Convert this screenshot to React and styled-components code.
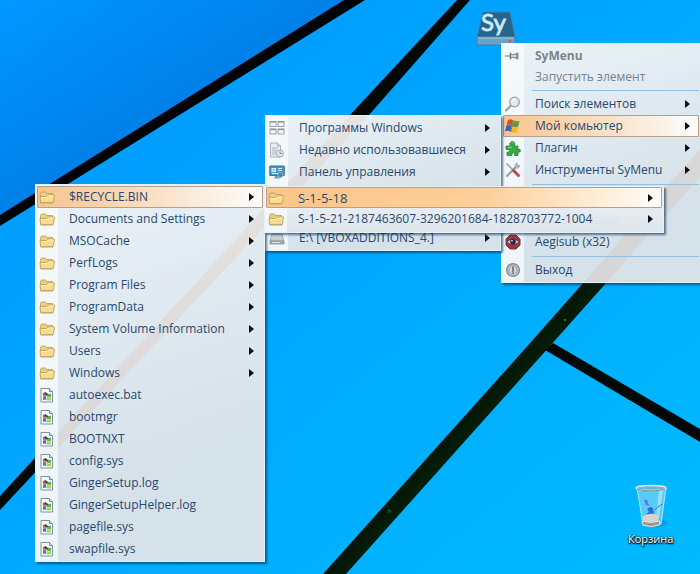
import styled, { createGlobalStyle } from "styled-components";

const GlobalStyle = createGlobalStyle`
  *, *::before, *::after {
    box-sizing: border-box;
  }
  body {
    margin: 0;
    overflow: hidden;
    font-family: "Open Sans", "Noto Sans", sans-serif;
  }
`;

const Desktop = styled.main`
  position: relative;
  min-height: 100vh;
  overflow: hidden;
  background-color: #00b2ff;
`;

const WallpaperArt = styled.svg`
  position: absolute;
  inset: 0;
  width: 100%;
  height: 100%;
`;

const Menu = styled.div`
  position: absolute;
  top: ${({ $top }) => $top}px;
  left: ${({ $left }) => $left}px;
  width: ${({ $width }) => $width}px;
  display: flex;
  flex-direction: column;
  padding: ${({ $flush }) => ($flush ? "0 1px 2px" : "1px")};
  border: 1px solid #e6f2f9;
  background:
    linear-gradient(90deg, rgba(250, 253, 255, 0.7) 22px, transparent 22px),
    ${({ $flush }) =>
      $flush
        ? "linear-gradient(180deg, rgba(240, 243, 246, 0.97), rgba(222, 230, 236, 0.96))"
        : "linear-gradient(160deg, rgba(252, 248, 246, 0.93), rgba(232, 230, 232, 0.92) 70%)"};
  box-shadow: 2px 2px 2px rgba(0, 40, 80, 0.6);
`;

const Item = styled.button`
  display: grid;
  grid-template-columns: 20px 1fr 14px;
  column-gap: 10px;
  align-items: center;
  height: ${({ $short }) => ($short ? 21 : 22)}px;
  padding: 0 4px 0 1px;
  border: 1px solid ${({ $active }) => ($active ? "#b99f86" : "transparent")};
  border-radius: 1px;
  background: ${({ $active, $strong }) =>
    $active
      ? $strong
        ? "linear-gradient(90deg, #fbc58c, #ffcf99 55%, #fffaf3 97%)"
        : "linear-gradient(90deg, #f7c490, #f9dfc3 50%, #fcfaf8 95%)"
      : "none"};
  color: ${({ $muted }) => ($muted ? "#7d838a" : "#27496d")};
  font-family: inherit;
  font-size: ${({ $size }) => $size || 12}px;
  font-weight: ${({ $bold }) => ($bold ? 700 : 400)};
  line-height: 18px;
  text-align: left;
  white-space: nowrap;
  cursor: pointer;
`;

const Label = styled.span`
  min-width: 0;
`;

const Arrow = styled.span`
  justify-self: center;
  width: 0;
  height: 0;
  border: 4px solid transparent;
  border-left: 5px solid #0b0f16;
  border-right: 0;
`;

const Separator = styled.hr`
  width: calc(100% - 29px);
  height: 1px;
  margin: 3px 0 2px 29px;
  border: 0;
  background-color: #93bfe0;
`;

const Glyph = styled.svg`
  display: block;
  width: 16px;
  height: 16px;
`;

const Shortcut = styled.button`
  position: absolute;
  top: ${({ $top }) => $top}px;
  left: ${({ $left }) => $left}px;
  display: flex;
  flex-direction: column;
  align-items: center;
  gap: 2px;
  padding: 0;
  border: 0;
  background: none;
  color: #ffffff;
  font-family: inherit;
  font-size: 11px;
  line-height: 16px;
  text-shadow: 0 0 2px #000000, 1px 1px 2px #000000, 0 1px 1px #000000;
  cursor: pointer;

  svg {
    text-shadow: none;
  }
`;

const icons = {
  folder: (
    <>
      <path d="M1.500 12.500V4.500L2.500 3h4l1 1.500h6V7" fill="#ecd183" stroke="#b99a4c" strokeWidth=".8" />
      <path d="M1 7.500h6.500l1.500-1.500h6.500L14.300 13.500H1.500Z" fill="#f6dc8c" stroke="#bd9b48" strokeWidth=".8" />
      <path d="M2 8.500h6l1.500-1.500h5" stroke="#fff5c8" strokeWidth=".9" fill="none" />
      <path d="M1.500 14.300h12.500" stroke="#b7ad91" strokeWidth=".7" />
    </>
  ),
  file: (
    <>
      <path d="M2 1.500h8.500l3 3V15H2Z" fill="#f7fbff" stroke="#7694b0" />
      <path d="M10.500 1.500v3h3" fill="#d3e5f2" stroke="#5d8dbf" />
      <path d="M4 6q2-1 3 0v3q-2-1-3 0Z" fill="#a95f39" />
      <path d="M7.500 6q2 1.500 4.500.5v3q-2 1-4.500 0Z" fill="#67a94f" />
      <path d="M4 9.500q2-1 3 0V13q-1.500-1-3 0Z" fill="#5277b7" />
      <path d="M7.500 10q2 1 4.500 0v3.200q-2 .8-4.500 0Z" fill="#a9ce59" />
      <path d="M6 5.500 8.500 8" stroke="#3b352f" strokeWidth="1.500" />
    </>
  ),
  pin: (
    <>
      <path d="M0 8h5" stroke="#858b90" strokeWidth="1.300" />
      <path d="M5.500 4.500v7" stroke="#747b80" strokeWidth="1.400" />
      <path d="M6 6.500q2.500 1 5.500-1v5q-3-2-5.500-1" fill="#dde0e3" stroke="#747b80" />
      <path d="M12.500 4.500v7" stroke="#8a9095" strokeWidth="1.800" />
    </>
  ),
  search: (
    <>
      <path d="m6 9.500-5 5" stroke="#aaa19a" strokeWidth="2.400" strokeLinecap="round" />
      <circle cx="9.500" cy="6" r="4.800" fill="#dceaf4" stroke="#98a2aa" strokeWidth="1.300" />
      <path d="M7 5.500Q8 3 10.500 3" stroke="#fff" fill="none" strokeWidth="1.300" />
    </>
  ),
  windows: (
    <>
      <path d="M2.800 2.500q2.500-2 5-.5L6.800 7Q4.300 5.500 1.500 7Z" fill="#d94a25" />
      <path d="M8.800 2.500q2.500 1.500 5.700.2L13.300 8q-2.800 1-5.500-.5Z" fill="#57a032" />
      <path d="M1.300 8q2.700-1.500 5.200-.2L5.300 13.500Q2.800 12 0 13.500Z" fill="#3162c4" />
      <path d="M7.500 8.700q2.700 1.300 5.500.2L11.700 14.500q-2.800 1-5.500-.8Z" fill="#eeb820" />
      <path d="M8.200 2 5.800 14M1.300 7.500q3-1.500 5.500 0t6 .7" stroke="#5b4a45" strokeWidth=".7" fill="none" />
    </>
  ),
  puzzle: (
    <>
      <path
        d="M1 6h4.500Q4.300 4.500 5 3q1.300-2.500 4-1 1.600 1.800.3 4H13v3.500q2.500-.8 2.500 1.200T13 12v3.500H9.500q.8-2.800-1.200-2.800T7 15.500H2v-3.200q2.500.3 2.500-1.500T1 9.500Z"
        fill="#38a849"
        stroke="#238434"
        strokeWidth=".8"
      />
      <path d="M3 7.300h4M6.500 3q1-.8 2 0" stroke="#8bd68d" fill="none" />
    </>
  ),
  tools: (
    <>
      <path d="m1.500 14.500 10-10" stroke="#939da5" strokeWidth="2.200" />
      <path d="M10 5.500V3L12 .8l.3 2.700 2.700.2L13 6h-3Z" fill="#b8c0c6" stroke="#8b959d" strokeWidth=".7" />
      <path d="m1.500 1.500 6.500 6.500" stroke="#8d969d" strokeWidth="1.500" />
      <path d="m8.500 8.500 5 5" stroke="#bc4d4c" strokeWidth="3" strokeLinecap="round" />
    </>
  ),
  eye: (
    <>
      <path d="M5 1h6l4 4v6l-4 4H5l-4-4V5Z" fill="#9d3441" stroke="#743540" />
      <path d="M1.500 8Q8 2.500 14.500 8 8 13 1.500 8Z" fill="#d9c3ce" stroke="#562e40" strokeWidth=".8" />
      <circle cx="8" cy="7.800" r="2.800" fill="#2d2343" />
      <circle cx="7" cy="6.800" r=".8" fill="#fff" />
    </>
  ),
  power: (
    <>
      <circle cx="8" cy="8" r="6.300" fill="#d4d8da" stroke="#858c91" strokeWidth="1.500" />
      <circle cx="8" cy="8" r="4.200" fill="none" stroke="#8c9499" />
      <path d="M8 4.500v7" stroke="#747d83" strokeWidth="1.800" />
    </>
  ),
  grid: (
    <>
      {[[1, 1.5], [9, 1.5], [1, 9], [9, 9]].map(([x, y]) => (
        <g key={`${x}-${y}`}>
          <rect x={x} y={y} width="6" height="5" fill="#f3f5f7" stroke="#9aa2a9" />
          <path d={`M${x} ${y + 0.5}h6`} stroke="#8e979e" strokeWidth="1.300" />
        </g>
      ))}
    </>
  ),
  recent: (
    <>
      <path d="M1.500 1h7l3 3v11h-10Z" fill="#e8edf1" stroke="#a6b2bb" />
      <path d="M8.500 1v3h3M3 6h6M3 8h5M3 10h4M3 12h4" stroke="#a9b7c1" fill="none" />
      <circle cx="11" cy="11.500" r="3.500" fill="#dfe5ea" stroke="#a3b0b9" />
      <path d="M11 9.500v2h2" stroke="#7c8b96" fill="none" />
    </>
  ),
  panel: (
    <>
      <path d="M.8 2h14.500v9.500H.8Z" fill="#4b97c4" stroke="#34759d" />
      <path d="M3 4.500h3.500v3H3ZM9 4.500h4M9 6.500h4M3 9.500h6" fill="#8fcbe2" stroke="#d6f0fa" strokeWidth="1.100" />
      <path d="M6 12h4l1 2.500H5Z" fill="#7f9dae" />
      <circle cx="11.500" cy="11" r="2.600" fill="#3f83b3" stroke="#b9d8e8" strokeWidth=".6" />
    </>
  ),
  drive: (
    <>
      <path d="M3 4h10l2 7H1Z" fill="#c9d0d5" stroke="#959fa7" strokeWidth=".7" />
      <path d="M1 11h14v3H1Z" fill="#a4adb4" stroke="#7f8991" strokeWidth=".7" />
      <path d="M3 12.500h8" stroke="#e1e5e8" />
    </>
  ),
};

const folders = [
  "$RECYCLE.BIN",
  "Documents and Settings",
  "MSOCache",
  "PerfLogs",
  "Program Files",
  "ProgramData",
  "System Volume Information",
  "Users",
  "Windows",
];

const files = [
  "autoexec.bat",
  "bootmgr",
  "BOOTNXT",
  "config.sys",
  "GingerSetup.log",
  "GingerSetupHelper.log",
  "pagefile.sys",
  "swapfile.sys",
];

const MenuItem = ({ icon, label, submenu, ...rest }) => (
  <Item type="button" role="menuitem" aria-haspopup={submenu ? "menu" : undefined} {...rest}>
    {icon ? (
      <Glyph viewBox="0 0 16 16" fill="none" aria-hidden="true">
        {icons[icon]}
      </Glyph>
    ) : (
      <span />
    )}
    <Label>{label}</Label>
    {submenu && <Arrow />}
  </Item>
);

const Wallpaper = () => (
  <WallpaperArt viewBox="0 0 700 574" preserveAspectRatio="xMidYMid slice" aria-hidden="true">
    <defs>
      <linearGradient id="pane" x1="0" y1="0" x2="1" y2="1">
        <stop offset="0" stopColor="#0098ff" />
        <stop offset=".5" stopColor="#0080e9" />
        <stop offset="1" stopColor="#0087ef" />
      </linearGradient>
      <linearGradient id="middle" x1="0" y1="0" x2="1" y2="1">
        <stop offset="0" stopColor="#0096ff" />
        <stop offset=".5" stopColor="#00a9ff" />
        <stop offset="1" stopColor="#00bbff" />
      </linearGradient>
      <linearGradient id="beam" x1="0" y1="0" x2="1" y2="1">
        <stop offset=".45" stopColor="#062b1b" />
        <stop offset=".5" stopColor="#041506" />
        <stop offset=".55" stopColor="#06230b" />
      </linearGradient>
    </defs>
    <rect width="700" height="574" fill="url(#middle)" />
    <path d="M0 0H345L0 216Z" fill="url(#pane)" />
    <path d="M344 0H365L0 226V215Z" fill="#000306" />
    <path d="M457 0H470L369 115 0 510V496L350 115Z" fill="#020805" />
    <path d="M700 149V177L607 282 550 346 346 574H323L531 342 584 282Z" fill="url(#beam)" />
    <path d="M553 343 700 429V442L545 350Z" fill="#010907" />
    <circle cx="565" cy="320" r="1" fill="#71824b" />
    <circle cx="389" cy="511" r="2" fill="#074b16" />
  </WallpaperArt>
);

const App = () => {
  return (
    <>
      <GlobalStyle />
      <Desktop>
        <Wallpaper />

        <Shortcut $top={7} $left={475} aria-label="SyMenu">
          <svg width="42" height="39" viewBox="0 -3 42 39" aria-hidden="true">
            <path d="M8 2h27l5 25H2Z" fill="#246690" stroke="#477fa2" />
            <path d="M2 27h38v8H2Z" fill="#6aa1c4" stroke="#427694" strokeWidth=".8" />
            <path d="M3 28h36" stroke="#a8cee2" />
            <circle cx="35" cy="31" r="1.500" fill="#c65770" />
            <text x="6" y="21" fill="#cdeaf9" fontFamily="Lato, sans-serif" fontSize="24" stroke="#cdeaf9" strokeWidth=".8">
              Sy
            </text>
          </svg>
        </Shortcut>

        <Shortcut $top={483} $left={628}>
          <svg width="38" height="46" viewBox="0 0 38 46" aria-hidden="true">
            <ellipse cx="24" cy="40" rx="12" ry="4" fill="#087bb1" opacity=".4" />
            <path d="M5 5h29l-5 36q-9 4-18 0Z" fill="#91d9f4" fillOpacity=".6" stroke="#c3dee8" />
            <path d="M27 8h4l-4 27h-3Z" fill="#d8f4ff" opacity=".5" />
            <path d="M12 17q4-1 4 3l2 3-4-1Z" fill="#5b6fd0" opacity=".85" />
            <path d="M15 26q5-4 6 0l1 4-5 3-3-2 3-2Z" fill="#2b5fcb" opacity=".9" />
            <path d="m22 27 8-6" stroke="#2988be" />
            <path d="M10 34q8-6 17-1l-1 6H11Z" fill="#d6d3cc" />
            <path d="M10 38q9 3 18 0l-1 4q-8 3-16 0Z" fill="#9b9791" stroke="#e7e3dd" />
            <ellipse cx="19" cy="5" rx="15" ry="2.500" fill="#67b7d6" stroke="#dee7e9" strokeWidth="1.500" />
            <path d="M5 6q14 4 28 0" stroke="#7a888e" fill="none" />
          </svg>
          Корзина
        </Shortcut>

        <Menu role="menu" aria-label="SyMenu" $top={43} $left={501} $width={200}>
          <MenuItem icon="pin" label="SyMenu" $muted $bold $short />
          <MenuItem label="Запустить элемент" $muted $short />
          <Separator />
          <MenuItem icon="search" label="Поиск элементов" submenu />
          <MenuItem icon="windows" label="Мой комьютер" submenu $active />
          <MenuItem icon="puzzle" label="Плагин" submenu />
          <MenuItem icon="tools" label="Инструменты SyMenu" submenu />
          <Separator />
          <MenuItem icon="folder" label="Папка" />
          <MenuItem label="Notes Portable" />
          <MenuItem icon="eye" label="Aegisub (x32)" />
          <Separator />
          <MenuItem icon="power" label="Выход" />
        </Menu>

        <Menu role="menu" aria-label="Мой комьютер" $top={115} $left={265} $width={236}>
          <MenuItem icon="grid" label="Программы Windows" submenu />
          <MenuItem icon="recent" label="Недавно использовавшиеся" submenu />
          <MenuItem icon="panel" label="Панель управления" submenu />
          <MenuItem icon="drive" submenu />
          <MenuItem icon="drive" submenu />
          <MenuItem icon="drive" label="E:\ [VBOXADDITIONS_4.]" submenu />
        </Menu>

        <Menu role="menu" aria-label="Диск" $top={184} $left={35} $width={230}>
          {folders.map((name, i) => (
            <MenuItem key={name} icon="folder" label={name} submenu $active={i === 0} />
          ))}
          {files.map((name) => (
            <MenuItem key={name} icon="file" label={name} />
          ))}
        </Menu>

        <Menu role="menu" aria-label="$RECYCLE.BIN" $flush $top={186} $left={264} $width={400}>
          <MenuItem icon="folder" label="S-1-5-18" submenu $active $strong $short $size={13} />
          <MenuItem icon="folder" label="S-1-5-21-2187463607-3296201684-1828703772-1004" submenu />
        </Menu>
      </Desktop>
    </>
  );
};

export default App;
